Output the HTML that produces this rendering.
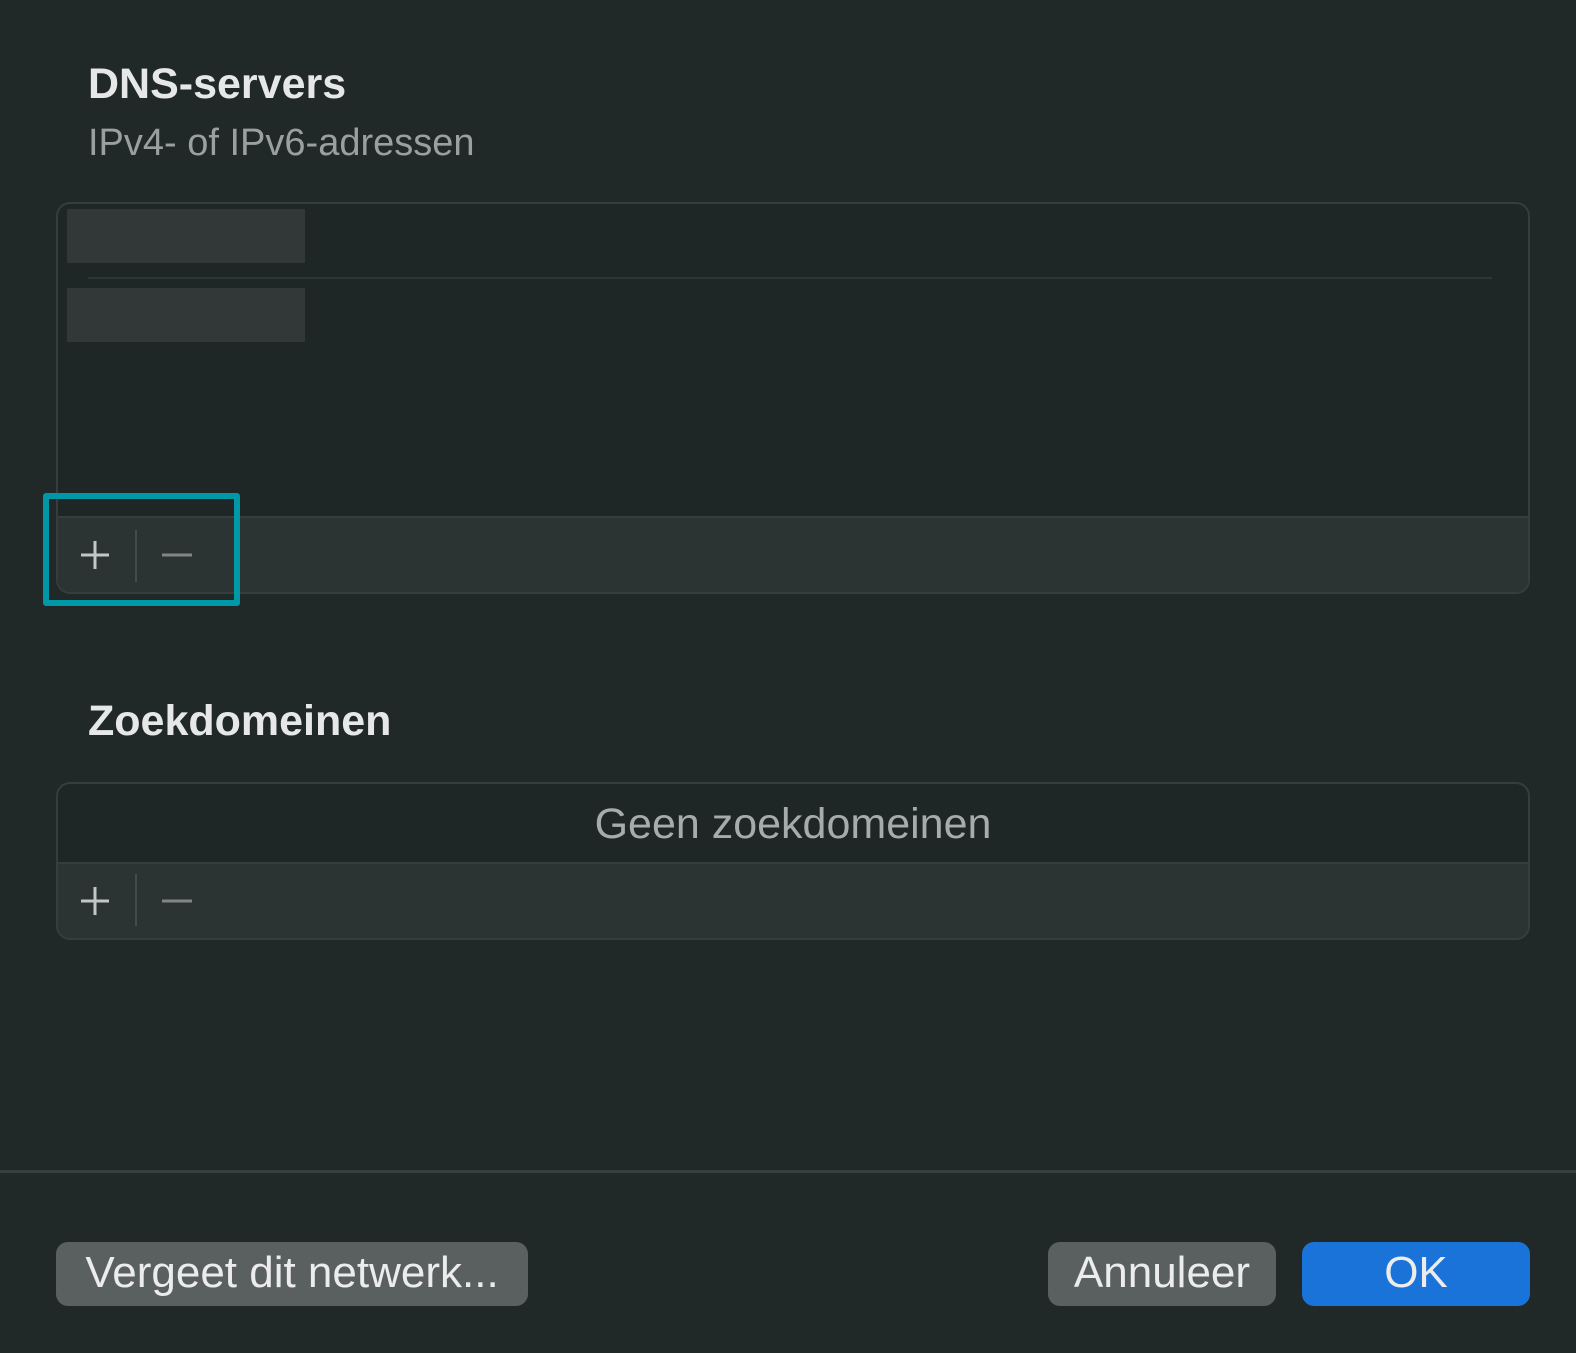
<!DOCTYPE html>
<html><head><style>
body{margin:0;width:1576px;height:1353px;background:#212828;font-family:"Liberation Sans",sans-serif;position:relative;overflow:hidden}
.a{position:absolute}
.box{position:absolute;left:56px;width:1470px;border:2px solid #363d3d;border-radius:14px;background:#1f2626;overflow:hidden}
.bar{position:absolute;left:0;right:0;bottom:0;background:#2c3333;border-top:2px solid #363d3d}
.sep{position:absolute;left:77px;width:2px;background:#434a4a}
.ic{position:absolute;left:22px;width:120px;height:40px}
.btn{position:absolute;top:1242px;height:64px;border-radius:12px;color:#ececec;font-size:44px;text-align:center;line-height:62px}
</style></head><body>
<div class="a" style="left:88px;top:60px;font-size:43px;font-weight:bold;color:#e6e8e8">DNS-servers</div>
<div class="a" style="left:88px;top:122px;font-size:38px;color:#9a9fa0">IPv4- of IPv6-adressen</div>
<div class="box" style="top:202px;height:388px">
 <div class="a" style="left:9px;top:5px;width:238px;height:54px;background:#323838"></div>
 <div class="a" style="left:30px;top:73px;width:1404px;height:2px;background:#2d3434"></div>
 <div class="a" style="left:9px;top:84px;width:238px;height:54px;background:#323838"></div>
 <div class="bar" style="height:74px">
  <svg class="ic" style="top:17px" viewBox="0 0 120 40"><path d="M15 6V34M1 20H29" stroke="#c2c6c6" stroke-width="3"/><path d="M82 20H112" stroke="#808585" stroke-width="3"/></svg>
  <div class="sep" style="top:12px;height:52px"></div>
 </div>
</div>
<div class="a" style="left:43px;top:493px;width:185px;height:101px;border:6px solid #0097a7;border-radius:3px"></div>
<div class="a" style="left:88px;top:697px;font-size:43px;font-weight:bold;color:#e6e8e8">Zoekdomeinen</div>
<div class="box" style="top:782px;height:154px">
 <div class="a" style="left:0;right:0;top:16px;text-align:center;font-size:43px;color:#a6abab">Geen zoekdomeinen</div>
 <div class="bar" style="height:74px">
  <svg class="ic" style="top:17px" viewBox="0 0 120 40"><path d="M15 6V34M1 20H29" stroke="#c2c6c6" stroke-width="3"/><path d="M82 20H112" stroke="#808585" stroke-width="3"/></svg>
  <div class="sep" style="top:10px;height:52px"></div>
 </div>
</div>
<div class="a" style="left:0;top:1170px;width:1576px;height:3px;background:#373e3e"></div>
<div class="btn" style="left:56px;width:472px;background:#5a5f5f">Vergeet dit netwerk...</div>
<div class="btn" style="left:1048px;width:228px;background:#5a5f5f">Annuleer</div>
<div class="btn" style="left:1302px;width:228px;background:#1a73d9">OK</div>
</body></html>
